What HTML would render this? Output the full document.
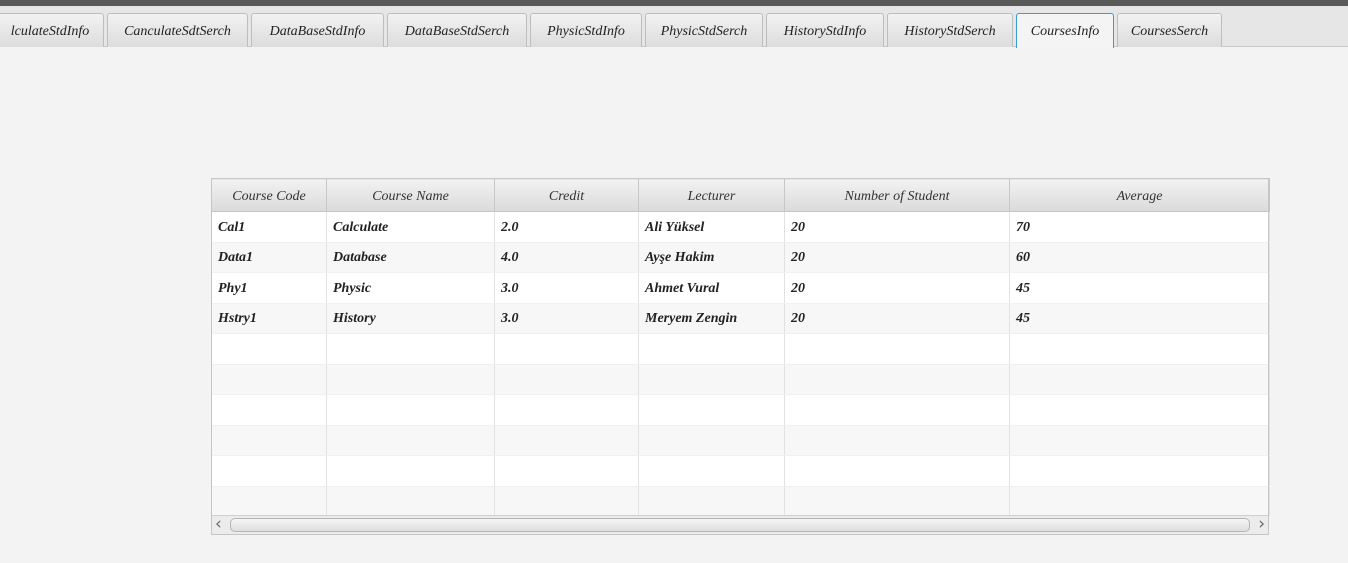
<!DOCTYPE html>
<html><head><style>
*{margin:0;padding:0;box-sizing:border-box}
body{width:1348px;height:563px;background:#f3f3f3;position:relative;overflow:hidden;font-family:"Liberation Serif",serif;font-style:italic;color:#222}
.top{position:absolute;left:0;top:0;width:1348px;height:6px;background:#595959}
.strip{position:absolute;left:0;top:6px;width:1348px;height:41px;background:#e6e6e6;border-bottom:1px solid #c8c8c8}
.tab{position:absolute;top:13px;height:34px;background:linear-gradient(#f2f2f2,#dcdcdc);border:1px solid #bdbdbd;border-bottom:none;border-radius:3px 3px 0 0;font-size:14px;line-height:36px;text-align:center;white-space:nowrap;overflow:hidden}
.tab.sel{background:#f4f4f4;border-color:#3a9bd9;border-bottom:none;height:35px}
table{position:absolute;left:211px;top:178px;border-collapse:collapse;border:1px solid #c6c6c6;width:1058px;table-layout:fixed}
th{height:33px;padding-top:3px;background:linear-gradient(#f2f2f2,#dadada);border-right:1px solid #c6c6c6;border-bottom:1px solid #c6c6c6;font-weight:normal;font-size:14px;color:#333}
td{height:30.5px;border-right:1px solid #e2e2e2;border-bottom:1px solid #f0f0f0;padding-left:6px;padding-top:2px;font-size:14px;font-weight:bold;color:#222}
tr.w td{background:#fff}
tr.g td{background:#f7f7f7}
.sb{position:absolute;left:212px;top:515px;width:1056px;height:19px;background:#ececec;border-top:1px solid #d0d0d0}
.thumb{position:absolute;left:18px;top:2px;width:1020px;height:14px;border:1px solid #b5b5b5;border-radius:5px;background:linear-gradient(#f5f5f5,#dedede)}
.arr{position:absolute;top:-2px;font-size:17px;color:#666;font-style:normal;font-family:"DejaVu Sans",sans-serif}
.outer{position:absolute;left:211px;top:178px;width:1058px;height:357px;border:1px solid #c6c6c6;pointer-events:none}
</style></head><body>
<div class="top"></div><div class="strip"></div>
<div class="tab" style="left:-4px;width:108px">lculateStdInfo</div>
<div class="tab" style="left:107px;width:141px">CanculateSdtSerch</div>
<div class="tab" style="left:251px;width:133px">DataBaseStdInfo</div>
<div class="tab" style="left:387px;width:140px">DataBaseStdSerch</div>
<div class="tab" style="left:530px;width:112px">PhysicStdInfo</div>
<div class="tab" style="left:645px;width:118px">PhysicStdSerch</div>
<div class="tab" style="left:766px;width:118px">HistoryStdInfo</div>
<div class="tab" style="left:887px;width:126px">HistoryStdSerch</div>
<div class="tab sel" style="left:1016px;width:98px">CoursesInfo</div>
<div class="tab" style="left:1117px;width:105px">CoursesSerch</div>
<table>
<colgroup><col style="width:115px"><col style="width:168px"><col style="width:144px"><col style="width:146px"><col style="width:225px"><col style="width:260px"></colgroup>
<tr><th>Course Code</th><th>Course Name</th><th>Credit</th><th>Lecturer</th><th>Number of Student</th><th>Average</th></tr>
<tr class="w"><td>Cal1</td><td>Calculate</td><td>2.0</td><td>Ali Yüksel</td><td>20</td><td>70</td></tr>
<tr class="g"><td>Data1</td><td>Database</td><td>4.0</td><td>Ayşe Hakim</td><td>20</td><td>60</td></tr>
<tr class="w"><td>Phy1</td><td>Physic</td><td>3.0</td><td>Ahmet Vural</td><td>20</td><td>45</td></tr>
<tr class="g"><td>Hstry1</td><td>History</td><td>3.0</td><td>Meryem Zengin</td><td>20</td><td>45</td></tr>
<tr class="w"><td></td><td></td><td></td><td></td><td></td><td></td></tr>
<tr class="g"><td></td><td></td><td></td><td></td><td></td><td></td></tr>
<tr class="w"><td></td><td></td><td></td><td></td><td></td><td></td></tr>
<tr class="g"><td></td><td></td><td></td><td></td><td></td><td></td></tr>
<tr class="w"><td></td><td></td><td></td><td></td><td></td><td></td></tr>
<tr class="g"><td></td><td></td><td></td><td></td><td></td><td></td></tr>
</table>
<div class="sb"><span class="arr" style="left:3px">‹</span><div class="thumb"></div><span class="arr" style="right:3px">›</span></div>
<div class="outer"></div>
</body></html>
